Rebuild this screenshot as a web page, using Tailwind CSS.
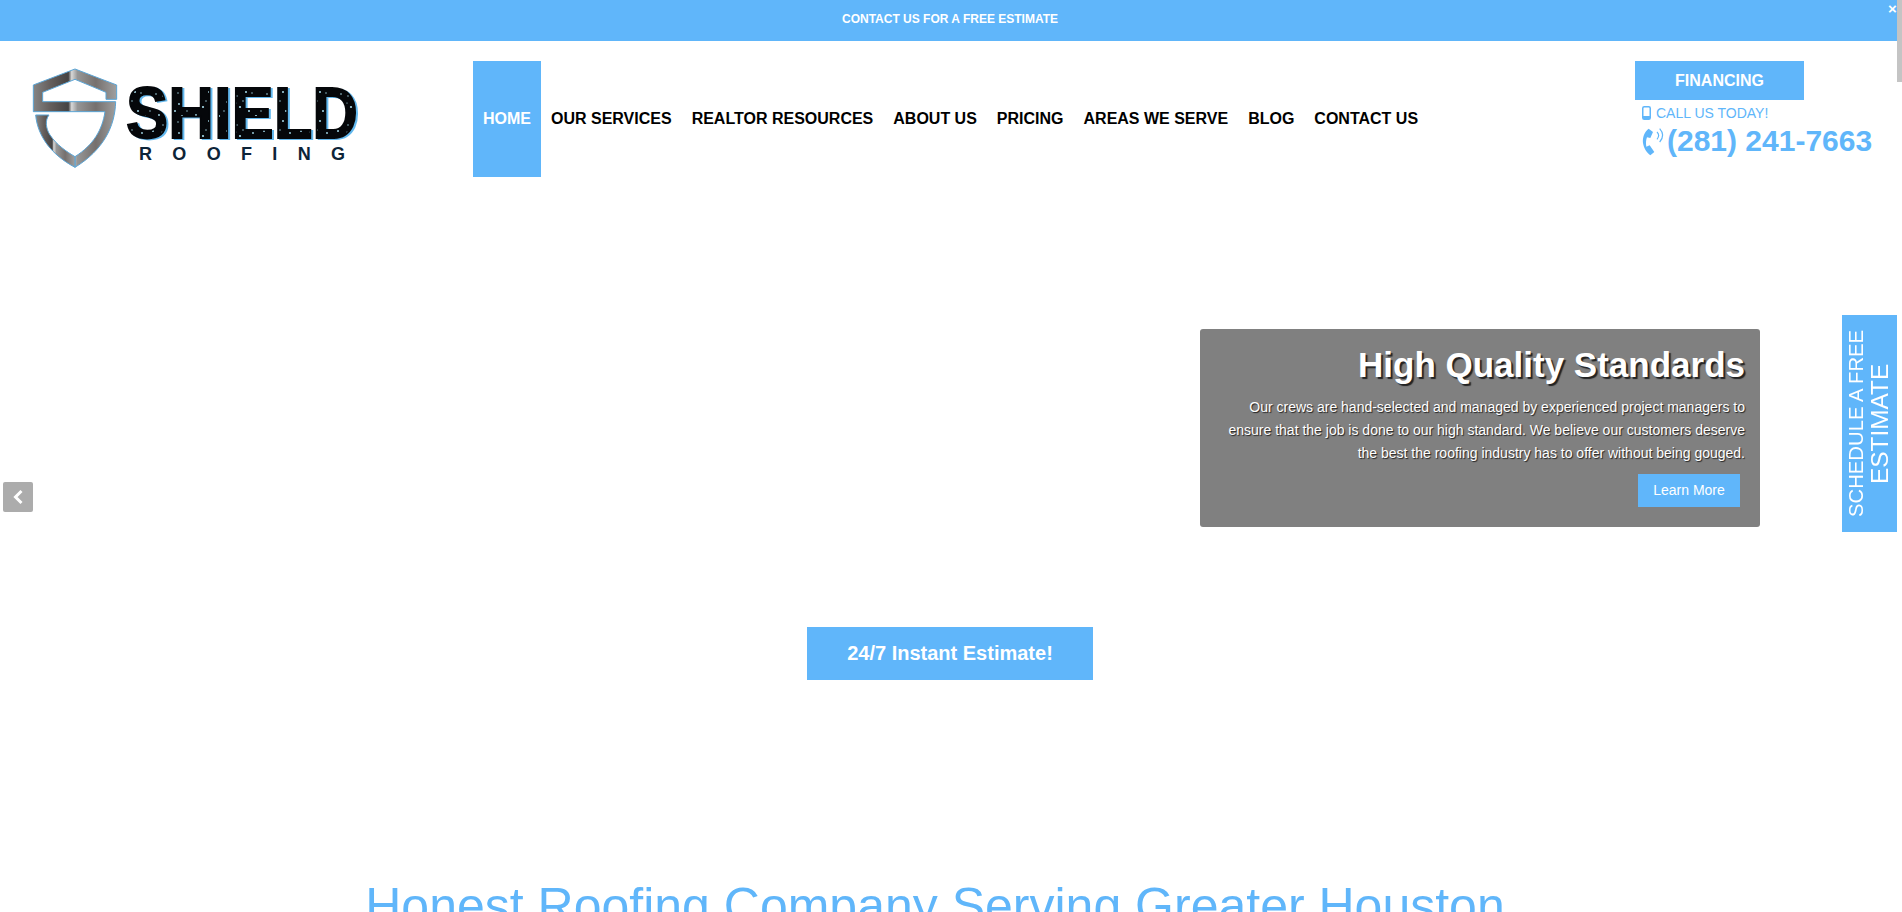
<!DOCTYPE html>
<html lang="en">
<head>
<meta charset="utf-8">
<title>Shield Roofing</title>
<script src="https://cdn.jsdelivr.net/npm/@tailwindcss/browser@4"></script>
</head>
<body class="bg-white">
<div class="relative h-[912px] w-[1902px] overflow-hidden bg-white font-['Liberation_Sans',Arial,sans-serif] text-black">

  <div class="flex h-[41px] items-center justify-center bg-[#60b6fa] pb-[4px] pr-[2px] text-[12px] font-bold text-white">CONTACT US FOR A FREE ESTIMATE</div>

  <header class="flex h-[136px] items-stretch pt-[20px]">
    <a class="block w-[473px] shrink-0" href="#">
      <svg width="400" height="130" viewBox="0 0 400 130" class="-mt-[21px]" aria-label="Shield Roofing logo">
        <defs>
          <linearGradient id="steel" x1="0" x2="1" y1="0" y2="0">
            <stop offset="0" stop-color="#858585"/>
            <stop offset="0.2" stop-color="#655f5d"/>
            <stop offset="0.42" stop-color="#454343"/>
            <stop offset="0.46" stop-color="#d8d8d8"/>
            <stop offset="0.53" stop-color="#969696"/>
            <stop offset="0.75" stop-color="#75706e"/>
            <stop offset="1" stop-color="#a0a0a0"/>
          </linearGradient>
          <pattern id="speck" width="37" height="29" patternUnits="userSpaceOnUse">
            <rect width="37" height="29" fill="#05070a"/>
            <g fill="#a8dcec">
              <circle cx="5" cy="4" r="1"/><circle cx="11" cy="17" r=".9"/><circle cx="18" cy="9" r="1.1"/>
              <circle cx="24" cy="23" r="1"/><circle cx="31" cy="6" r=".9"/><circle cx="34" cy="18" r="1.1"/>
              <circle cx="8" cy="25" r=".8"/><circle cx="15" cy="27" r=".7"/><circle cx="27" cy="13" r="1"/>
              <circle cx="21" cy="3" r=".7"/><circle cx="2" cy="13" r=".7"/><circle cx="14" cy="5" r=".6"/><circle cx="30" cy="24" r=".7"/>
            </g>
          </pattern>
        </defs>
        <g transform="translate(25 20) scale(.3333)" fill="url(#steel)" stroke="#5aa5d6" stroke-width="3" stroke-linejoin="round">
          <path d="M25 75 L150 27 L275 75 V118 H243 V97 L150 58 L53 97 V125 H272 C270 200 235 270 150 322 V290 C205 255 232 210 240 155 H25 Z"/>
          <path d="M32 165 H72 C60 180 62 205 75 225 C95 255 125 275 150 290 V322 C80 285 38 230 32 165 Z"/>
        </g>
        <text x="126" y="98" font-family="Liberation Sans, Arial, sans-serif" font-weight="700" font-size="73" textLength="232" lengthAdjust="spacingAndGlyphs" fill="url(#speck)" stroke="#05070a" stroke-width="1.8" class="[filter:drop-shadow(2px_1px_0_#62b8ee)]">SHIELD</text>
        <text x="139" y="120" font-family="Liberation Sans, Arial, sans-serif" font-weight="700" font-size="18" textLength="206" lengthAdjust="spacing" fill="#0d2438">ROOFING</text>
      </svg>
    </a>

    <nav class="flex h-[116px] items-stretch text-[16px] font-bold">
      <a href="#" class="flex items-center bg-[#60b6fa] px-[10px] text-white">HOME</a>
      <a href="#" class="flex items-center px-[10px]">OUR SERVICES</a>
      <a href="#" class="flex items-center px-[10px]">REALTOR RESOURCES</a>
      <a href="#" class="flex items-center px-[10px]">ABOUT US</a>
      <a href="#" class="flex items-center px-[10px]">PRICING</a>
      <a href="#" class="flex items-center px-[10px]">AREAS WE SERVE</a>
      <a href="#" class="flex items-center px-[10px]">BLOG</a>
      <a href="#" class="flex items-center px-[10px]">CONTACT US</a>
    </nav>

    <div class="ml-auto w-[267px] whitespace-nowrap text-[#60b6fa]">
      <a href="#" class="flex h-[39px] w-[169px] items-center justify-center bg-[#60b6fa] text-[16px] font-bold text-white">FINANCING</a>
      <div class="mt-[3px] flex h-[20px] items-center gap-[5px] pl-[7px] text-[14px] leading-none">
        <svg width="9" height="14" viewBox="0 0 9 14" fill="none"><rect x=".75" y=".75" width="7.5" height="12.5" rx="1.5" stroke="#60b6fa" stroke-width="1.5"/><rect x="1" y="10" width="7" height="3" fill="#60b6fa"/></svg>
        <span>CALL US TODAY!</span>
      </div>
      <div class="flex h-[36px] items-center pl-[7px] text-[30px] font-bold leading-none">
        <svg width="25" height="29" viewBox="35 78 75 85" fill="none">
          <path fill="#60b6fa" d="M55 82 C42 90 36 110 38 125 C40 140 50 155 60 162 L72 152 L58 132 L48 136 C46 125 47 115 50 108 L60 110 L68 92 Z"/>
          <path stroke="#60b6fa" stroke-width="3.5" d="M80 92 Q90 102 80 114"/>
          <path stroke="#60b6fa" stroke-width="3.5" d="M88 82 Q106 102 88 122"/>
        </svg>
        <span>(281) 241-7663</span>
      </div>
    </div>
  </header>

  <main class="relative h-[735px]">
    <button class="absolute left-[3px] top-[305px] flex h-[30px] w-[30px] items-center justify-center rounded-[2px] bg-[#acacac]" aria-label="Previous">
      <svg width="14" height="16" viewBox="0 0 14 16" fill="none"><path d="M10.5 2 L4.5 8 L10.5 14" stroke="#fff" stroke-width="3"/></svg>
    </button>

    <div class="absolute left-[1200px] top-[152px] h-[198px] w-[560px] rounded-[3px] bg-[#808080] px-[15px] pt-[16px] text-right text-white">
      <h2 class="text-[35px] font-bold leading-[40px] [text-shadow:2px_2px_1px_#222]">High Quality Standards</h2>
      <p class="mt-[11px] text-[14px] leading-[23px] [text-shadow:1px_1px_1px_#222]">Our crews are hand-selected and managed by experienced project managers to ensure that the job is done to our high standard. We believe our customers deserve the best the roofing industry has to offer without being gouged.</p>
      <a href="#" class="mr-[5px] mt-[9px] ml-auto flex h-[33px] w-[102px] items-center justify-center bg-[#60b6fa] text-[14px]">Learn More</a>
    </div>

    <div class="flex flex-col items-center pt-[450px]">
      <a href="#" class="mr-[2px] flex h-[53px] w-[286px] items-center justify-center bg-[#60b6fa] pb-[2px] text-[20px] font-bold text-white">24/7 Instant Estimate!</a>
      <h1 class="mr-[32px] mt-[198px] whitespace-nowrap text-[50px] font-normal leading-[56px] text-[#60b6fa]">Honest Roofing Company Serving Greater Houston</h1>
    </div>
  </main>

  <a href="#" class="absolute left-[1842px] top-[315px] flex h-[217px] w-[55px] rotate-180 flex-col items-center justify-center bg-[#60b6fa] pl-[3px] text-center text-white [writing-mode:vertical-rl]">
    <span class="text-[20.3px] leading-[24px]">SCHEDULE A FREE</span>
    <span class="text-[24.4px] leading-[24px]">ESTIMATE</span>
  </a>

  <div class="absolute right-0 top-0 h-[82px] w-[5px] bg-[#c4c4c4]"></div>
  <span class="absolute left-[1888px] top-[1px] text-[15px] font-bold leading-[15px] text-white">×</span>
</div>
</body>
</html>
